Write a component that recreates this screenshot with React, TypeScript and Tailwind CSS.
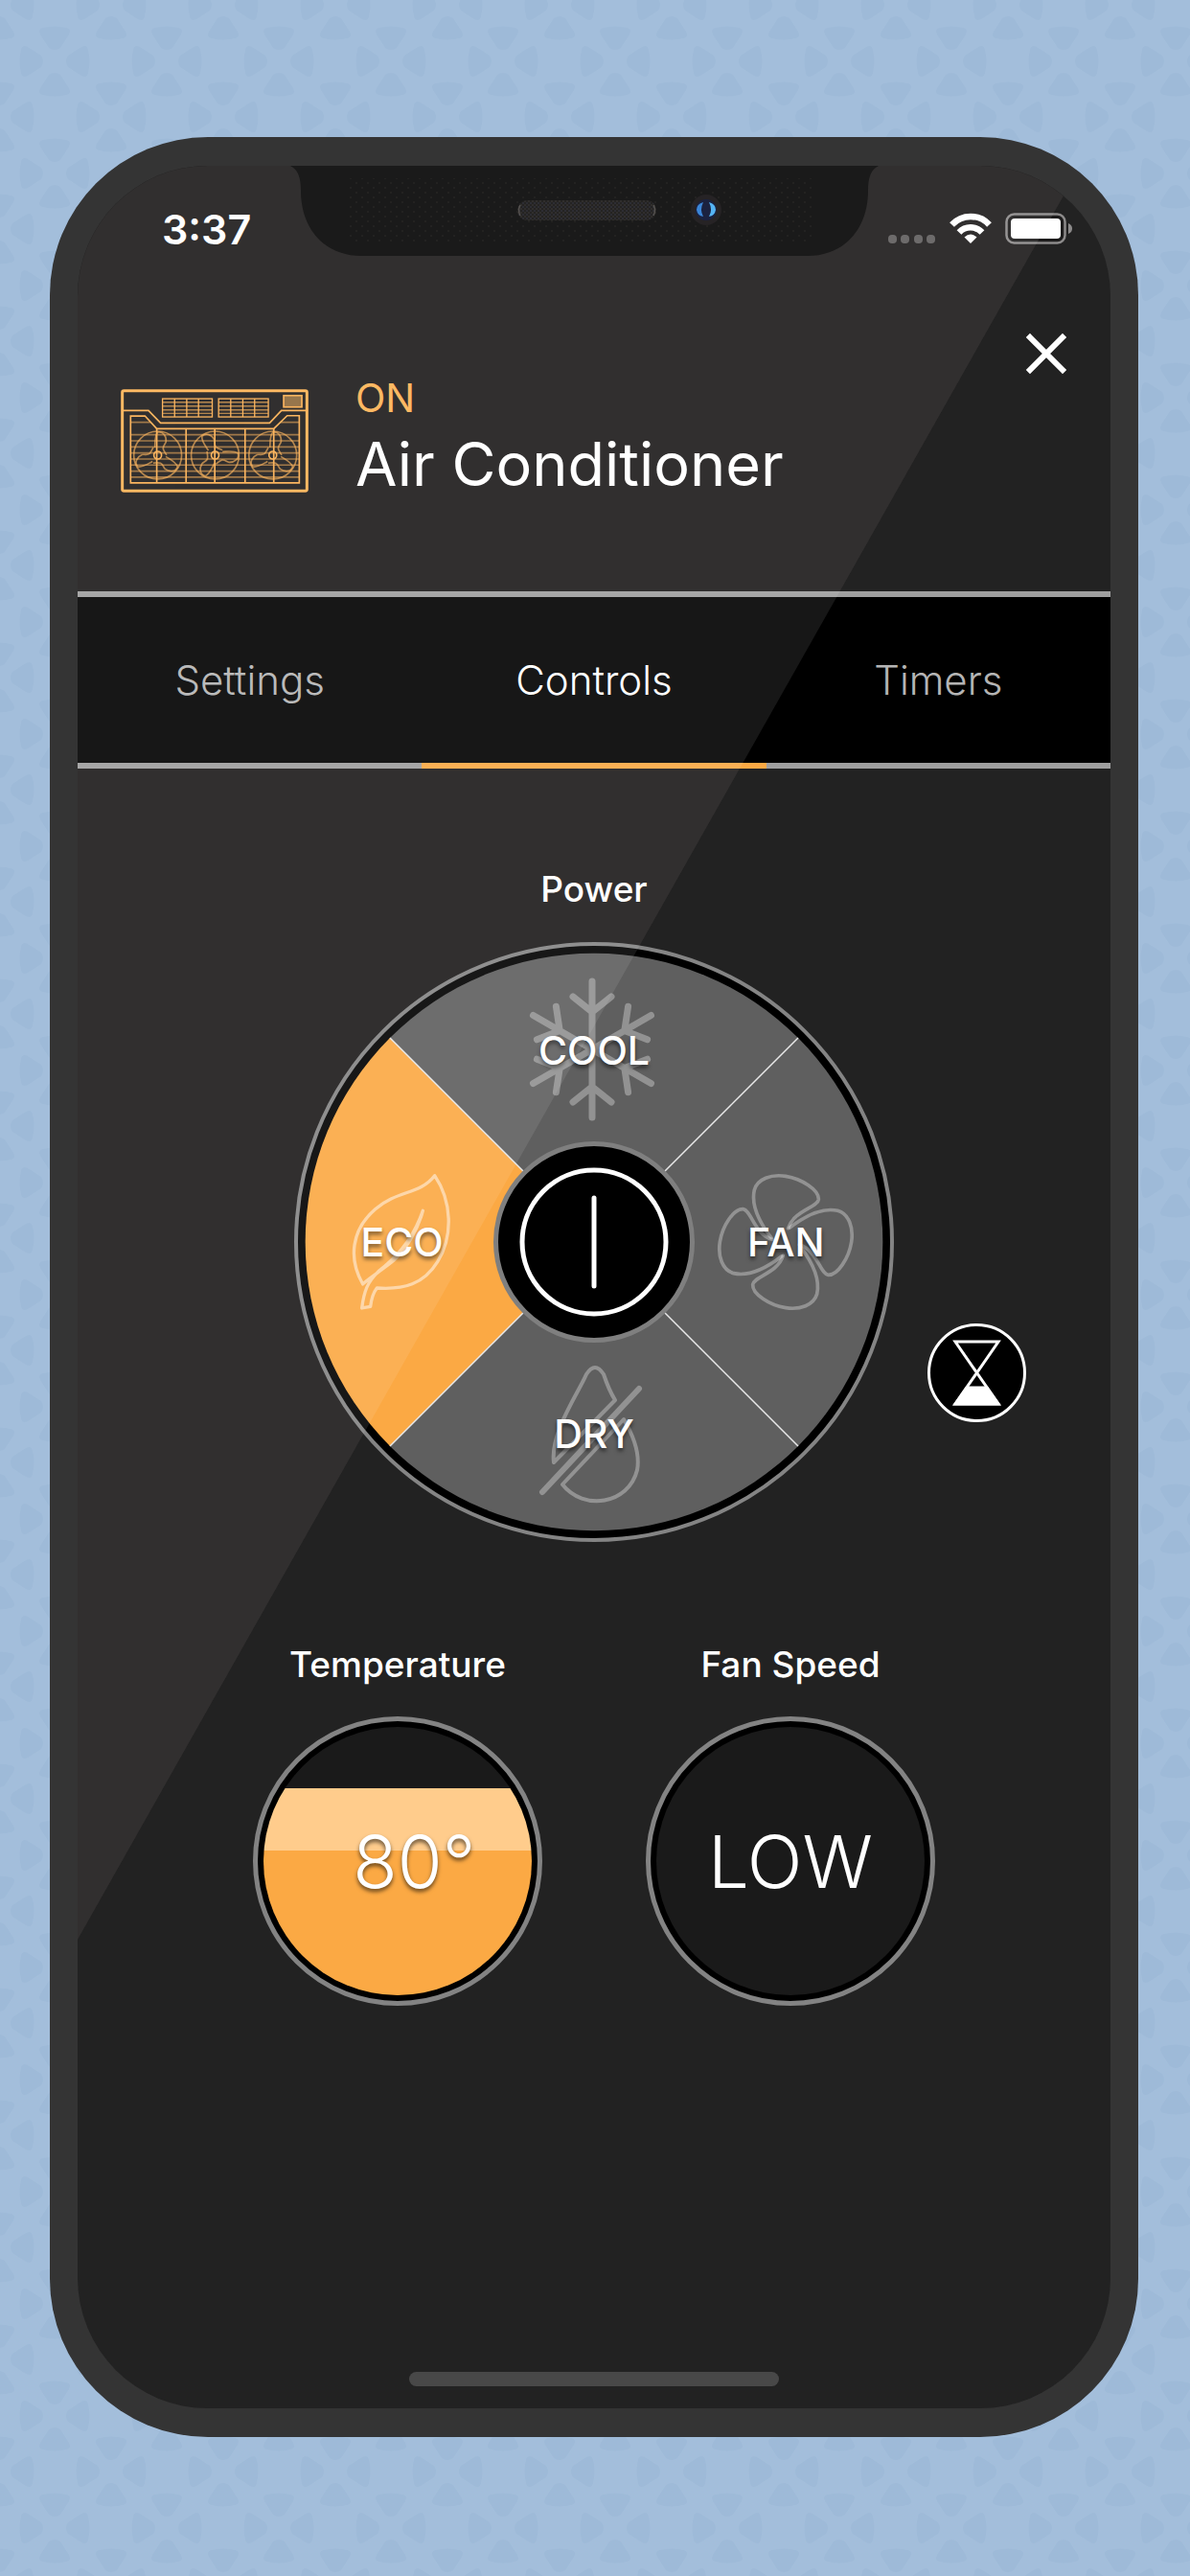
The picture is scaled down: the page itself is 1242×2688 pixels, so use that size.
import React, { useState } from "react";
import clsx from "clsx";

const modes = [
  { id: "cool", label: "COOL", place: "left-1/2 top-[18%]", wedge: "M313 313 L100 100 A301 301 0 0 1 526 100 Z" },
  { id: "fan", label: "FAN", place: "left-[82%] top-1/2", wedge: "M313 313 L526 100 A301 301 0 0 1 526 526 Z" },
  { id: "dry", label: "DRY", place: "left-1/2 top-[82%]", wedge: "M313 313 L526 526 A301 301 0 0 1 100 526 Z" },
  { id: "eco", label: "ECO", place: "left-[18%] top-1/2", wedge: "M313 313 L100 526 A301 301 0 0 1 100 100 Z" },
];

const tabs = ["Settings", "Controls", "Timers"];

const Backdrop = () => (
  <svg className="absolute inset-0 h-full w-full" aria-hidden="true">
    <defs>
      <g id="prop" fill="#9ebad8">
        {[0, 90, 180, 270].map((a) => (
          <path key={a} transform={`rotate(${a})`} d="M-6 -14 L-15 -28 Q-18 -34 -12 -35 Q0 -38 12 -35 Q18 -34 15 -28 L6 -14 Q0 -10 -6 -14 Z" />
        ))}
      </g>
      <pattern id="props" width="117" height="117" patternUnits="userSpaceOnUse">
        <use href="#prop" x="57" y="64" />
        <use href="#prop" x="-1" y="5" />
        <use href="#prop" x="116" y="5" />
        <use href="#prop" x="-1" y="122" />
        <use href="#prop" x="116" y="122" />
      </pattern>
    </defs>
    <rect width="100%" height="100%" fill="url(#props)" />
  </svg>
);

const Notch = () => (
  <svg width="614" height="95" viewBox="0 0 614 95" aria-hidden="true">
    <defs>
      <pattern id="mesh" width="12" height="10" patternUnits="userSpaceOnUse">
        <circle cx="3" cy="3" r="1" fill="#252422" />
        <circle cx="9" cy="8" r="1" fill="#252422" />
      </pattern>
      <pattern id="grill" width="4" height="4" patternUnits="userSpaceOnUse">
        <circle cx="1" cy="1" r="1" fill="#34312f" />
        <circle cx="3" cy="3" r="1" fill="#2f2f38" />
      </pattern>
    </defs>
    <path d="M0 0 C8 4 11 12 11 26 C11 66 36 94 74 94 H540 C578 94 603 66 603 26 C603 12 606 4 614 0 Z" fill="#1a1a1a" />
    <rect x="62" y="13" width="485" height="66" fill="url(#mesh)" />
    <rect x="237" y="36" width="145" height="21" rx="10" fill="#242322" />
    <rect x="237" y="36" width="145" height="21" rx="10" fill="url(#grill)" />
    <path d="M240 41 Q237 46 240 52 M379 41 Q382 46 379 52" stroke="#55524f" strokeWidth="1.5" fill="none" />
    <circle cx="434" cy="46" r="16" fill="#262325" />
    <circle cx="434" cy="46" r="11" fill="#1b2240" />
    <path d="M431 38 Q424 40 424 46 Q425 52 431 53 Q427 46 431 38 Z" fill="#3b86d8" />
    <path d="M437 38 Q444 40 444 46 Q443 52 437 53 Q441 46 437 38 Z" fill="#55b4f5" />
  </svg>
);

const StatusIcons = () => (
  <svg width="194" height="34" viewBox="0 0 194 34" aria-hidden="true">
    <g fill="#5f5d5d">
      <rect x="0" y="23" width="9" height="9" rx="4" />
      <rect x="13" y="23" width="9" height="9" rx="4" />
      <rect x="27" y="23" width="9" height="9" rx="4" />
      <rect x="40" y="23" width="9" height="9" rx="4" />
    </g>
    <g fill="none" stroke="#fff" strokeWidth="6.5">
      <path d="M66.500 12.500 A26.500 26.500 0 0 1 105.500 12.500" />
      <path d="M74 20.500 A16.500 16.500 0 0 1 98 20.500" />
    </g>
    <path d="M86 32 L79.500 25.500 Q86 19.500 92.500 25.500 Z" fill="#fff" />
    <rect x="123.500" y="1.500" width="61" height="30" rx="8" fill="#1c1b1b" stroke="#8c8a8a" strokeWidth="2.500" />
    <rect x="128" y="6" width="52" height="21" rx="4" fill="#fff" />
    <path d="M188 11 Q192 12.500 192 16.500 Q192 20.500 188 22 Z" fill="#8c8a8a" />
  </svg>
);

const Blades = ({ x, turn }: { x: number; turn: number }) => (
  <g>
    <circle cx={x} cy="250" r="75" opacity=".65" />
    <g opacity=".65" transform={`rotate(${turn} ${x} 250)`}>
      {[0, 120, 240].map((a) => (
        <path
          key={a}
          transform={`translate(${x} 250) rotate(${a})`}
          d="M-9 -24 C-8 -40 -10 -60 0 -72 C18 -76 28 -58 26 -42 C24 -34 16 -30 17 -20 C20 -10 26 -4 28 0"
        />
      ))}
    </g>
    <circle cx={x} cy="250" r="12" strokeWidth="5" />
  </g>
);

const UnitIcon = () => (
  <svg width="196" height="108" viewBox="49 43 589 324" fill="none" stroke="#fbae50" strokeWidth="5" aria-hidden="true">
    <rect x="54" y="48" width="579" height="314" rx="5" stroke="#fdb254" strokeWidth="9" />
    <path d="M58 110 H136 L174 149 H516 L553 110 H630" />
    <path d="M80 127 H125 L162 167 H529 L571 126 H609 V337 H80 Z" />
    <path d="M162 167 V337 M254 167 V337 M344 167 V337 M439 167 V337 M529 167 V337" />
    <g opacity=".55">
      <path d="M80 147 H142 M549 147 H609" />
      {[186, 205, 224, 243, 262, 281, 300, 319].map((y) => (
        <path key={y} d={`M80 ${y} H609`} />
      ))}
    </g>
    {[180, 356].map((x) => (
      <g key={x} strokeWidth="4">
        <rect x={x} y="73" width="156" height="57" />
        <path d={`M${x + 38} 73 V130 M${x + 76} 73 V130 M${x + 113} 73 V130`} />
        <path opacity=".65" d={`M${x} 84 H${x + 156} M${x} 96 H${x + 156} M${x} 108 H${x + 156} M${x} 119 H${x + 156}`} />
      </g>
    ))}
    <rect x="560" y="63" width="57" height="36" fill="#8d693b" />
    <Blades x={165} turn={0} />
    <Blades x={345} turn={-35} />
    <Blades x={526} turn={0} />
  </svg>
);

const Glyphs = () => (
  <g fill="none" stroke="#fff" strokeOpacity=".32" strokeLinecap="round" strokeLinejoin="round">
    <g transform="translate(311 112)">
      <path
        strokeWidth="7"
        d="M0 -71 V71 M-61.500 -35.500 L61.500 35.500 M-61.500 35.500 L61.500 -35.500 M-20 -55 L0 -39 L20 -55 M-20 55 L0 39 L20 55 M-37.600 -44.800 L-33.800 -19.500 L-57.600 -10.200 M37.600 -44.800 L33.800 -19.500 L57.600 -10.200 M-37.600 44.800 L-33.800 19.500 L-57.600 10.200 M37.600 44.800 L33.800 19.500 L57.600 10.200"
      />
    </g>
    <g transform="translate(433 227) scale(.3333)" strokeWidth="11">
      {[0, 90, 180, 270].map((a) => (
        <path key={a} transform={`rotate(${a} 240 258)`} d="M195 245 C145 180 134 130 142 95 C152 60 195 45 240 52 C290 60 345 95 343 125 C340 150 265 160 248 215" />
      ))}
    </g>
    <g transform="translate(48 227) scale(.3333)" strokeWidth="10" strokeOpacity=".5">
      <path d="M259 160 C245 215 205 290 150 330 C110 360 80 380 71 390 C25 310 35 220 110 155 C180 95 250 110 296 50 C350 130 355 240 305 320 C262 390 200 408 115 402 C105 415 98 435 95 460 L68 465 C75 410 85 385 120 350 C165 315 225 260 259 160" />
    </g>
    <path
      strokeWidth="4"
      d="M271 543 C267 512 297 470 305 451 Q314 437 323 451 C326 460 330 470 335 478 Z M344 498 C354 515 361 535 358 551 C349 587 302 594 280 566 Z"
    />
    <path strokeWidth="6" d="M360 466 L259 574" />
  </g>
);

const Dial = ({ mode, onPick }: { mode: string; onPick: (id: string) => void }) => {
  const [on, setOn] = useState(true);

  return (
    <div className="relative size-[626px]" role="group" aria-labelledby="power">
      <svg className="absolute inset-0 h-full w-full" viewBox="0 0 626 626" aria-hidden="true">
        <circle cx="313" cy="313" r="311" fill="#000" stroke="#848484" strokeWidth="4" />
        {modes.map((m) => (
          <path key={m.id} d={m.wedge} fill={m.id === mode ? "#fba944" : "#5f5f5f"} />
        ))}
        <path d="M100 100 L526 526 M526 100 L100 526" stroke="#e8e8e8" strokeWidth="1.500" />
        <Glyphs />
      </svg>
      {modes.map((m) => (
        <button
          key={m.id}
          aria-pressed={m.id === mode}
          onClick={() => onPick(m.id)}
          className={clsx(
            "absolute -translate-x-1/2 -translate-y-1/2 px-4 py-6 text-[41px] leading-12 font-medium [text-shadow:0_3px_4px_rgba(0,0,0,0.6)]",
            m.place
          )}
        >
          {m.label}
        </button>
      ))}
      <button
        aria-label="Power"
        aria-pressed={on}
        onClick={() => setOn(!on)}
        className="absolute left-1/2 top-1/2 z-20 size-[210px] -translate-x-1/2 -translate-y-1/2 rounded-full border-[5px] border-[#7f7f7f] bg-black"
      >
        <svg className="h-full w-full" viewBox="0 0 200 200" fill="none" stroke="#fff" strokeLinecap="round" strokeWidth="5">
          <circle cx="100" cy="100" r="75" />
          <path d="M100 54 V146" />
        </svg>
      </button>
    </div>
  );
};

const App = () => {
  const [tab, setTab] = useState("Controls");
  const [mode, setMode] = useState("eco");

  return (
    <div className="relative flex min-h-screen flex-col bg-[#a3bedb] pt-[143px] pr-[54px] pb-[145px] pl-[52px] font-[Inter,sans-serif] text-white">
      <Backdrop />
      <div className="relative flex flex-1 flex-col rounded-[165px] bg-[#343434] px-[29px] py-[30px]">
        <main className="relative flex flex-1 flex-col overflow-hidden rounded-[136px] bg-[#222222]">
          {/* glare, lower half sits behind the content */}
          <div className="absolute inset-0 bg-[#1d1b1b] [clip-path:polygon(0_0,97.1%_0,0_79.1%)]"></div>
          <div className="pointer-events-none absolute inset-0 z-10 bg-white/9 [clip-path:polygon(0_0,97.1%_0,0_79.1%)]"></div>

          {/* the notch sits over the glare */}
          <div className="absolute inset-x-0 top-0 z-20 flex justify-center pr-5">
            <Notch />
          </div>

          <div className="relative flex h-[132px] items-center justify-between pr-[38px] pl-[88px]">
            <span className="text-[43px] leading-12 font-semibold">3:37</span>
            <StatusIcons />
          </div>

          <div className="relative z-20 mt-[42px] flex justify-end pr-[45px]">
            <button aria-label="Close" className="size-11">
              <svg viewBox="0 0 44 44" stroke="#fff" strokeWidth="6" strokeLinecap="square" aria-hidden="true">
                <path d="M5 5 L39 39 M39 5 L5 39" />
              </svg>
            </button>
          </div>

          <header className="relative flex items-center gap-[49px] pb-[88px] pl-[45px]">
            <UnitIcon />
            <div>
              <p className="text-[41px] leading-12 text-[#fdb254]">ON</p>
              <h1 className="text-[63px] leading-[90px]">Air Conditioner</h1>
            </div>
          </header>

          <div role="tablist" className="relative grid grid-cols-3 border-t-6 border-[#9f9f9f] bg-black">
            {tabs.map((t) => (
              <button
                key={t}
                role="tab"
                aria-selected={t === tab}
                onClick={() => setTab(t)}
                className={clsx(
                  "h-[179px] border-b-6 text-[42px] font-light",
                  t === tab ? "border-[#fba944] text-white" : "border-[#9f9f9f] text-[#b4b4b4]"
                )}
              >
                {t}
              </button>
            ))}
          </div>

          <section className="relative flex flex-col items-center pt-[102px]">
            <h2 id="power" className="text-[37px] leading-12 font-medium">Power</h2>
            <div className="mt-[31px] grid w-full grid-cols-[1fr_auto_1fr]">
              <div></div>
              <Dial mode={mode} onPick={setMode} />
              <button aria-label="Timer" className="mt-[398px] ml-[35px] size-[103px] rounded-full border-3 border-white bg-black">
                <svg viewBox="0 0 97 97" fill="none" stroke="#fff" strokeWidth="3" aria-hidden="true">
                  <path d="M26 16 H71 L26 81 H71 Z" />
                  <path d="M38 64 H59 L71 81 H26 Z" fill="#fff" />
                </svg>
              </button>
            </div>
          </section>

          <section className="relative mt-[104px] flex justify-center gap-[108px]">
            <div className="flex flex-col items-center gap-[30px]">
              <h2 id="temperature" className="text-[37px] leading-12 font-medium">Temperature</h2>
              <button aria-describedby="temperature" className="size-[302px] rounded-full border-[5px] border-[#838383] bg-black p-[6px]">
                <span className="flex h-full w-full items-center justify-center rounded-full bg-[linear-gradient(#1a1a1a_23%,#ffcc8c_23%,#ffcc8c_46%,#fba944_46%)] text-[76px] leading-none font-light [text-shadow:0_3px_4px_rgba(0,0,0,0.6)]">
                  <span className="relative">
                    80<span className="absolute left-full top-0">°</span>
                  </span>
                </span>
              </button>
            </div>
            <div className="flex flex-col items-center gap-[30px]">
              <h2 id="fan-speed" className="text-[37px] leading-12 font-medium">Fan Speed</h2>
              <button aria-describedby="fan-speed" className="size-[302px] rounded-full border-[5px] border-[#838383] bg-black p-[6px]">
                <span className="flex h-full w-full items-center justify-center rounded-full bg-[#1a1a1a] text-[76px] leading-none font-light">LOW</span>
              </button>
            </div>
          </section>

          <div className="relative mx-auto mt-auto mb-[23px] h-[15px] w-[386px] rounded-full bg-[#484848]"></div>
        </main>
      </div>
    </div>
  );
};

export default App;
